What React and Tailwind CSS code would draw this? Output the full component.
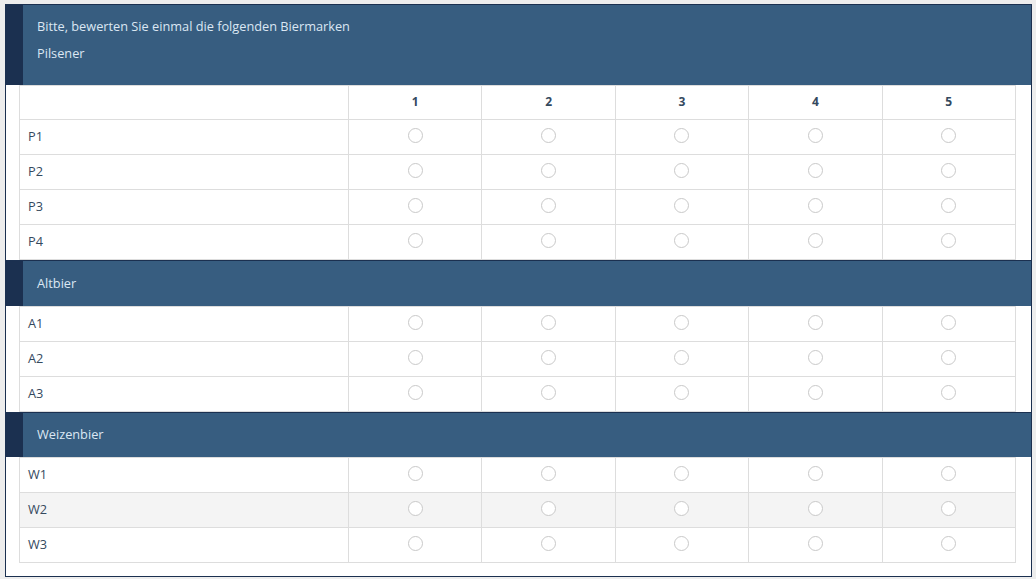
import React from "react";

const font = { fontFamily: '"Open Sans", "Noto Sans", sans-serif' };

function Radio() {
  return <span className="inline-block w-[15px] h-[15px] rounded-full border border-[#c9c9c9] bg-white align-middle -translate-y-[3px]" />;
}

function Band({ children, h }) {
  return (
    <div className="flex border-t border-[#1b3050]">
      <div className="w-[17px] shrink-0 bg-[#1b3050]" />
      <div className={"flex-1 bg-[#375d80] px-[14px] text-[12.75px] text-[#dbe7f3] flex items-center " + h}>
        {children}
      </div>
    </div>
  );
}

function Table({ rows, header }) {
  return (
    <div className="pl-[13px] pr-[15px]">
      <table className="w-full border-collapse table-fixed text-[12.75px]">
        <colgroup>
          <col className="w-[329px]" />
          <col />
          <col />
          <col />
          <col />
          <col />
        </colgroup>
        <tbody>
          {header && (
            <tr className="h-[34px]">
              <td className="border border-[#dddddd]" />
              {[1, 2, 3, 4, 5].map((n) => (
                <td key={n} className="border border-[#dddddd] text-center font-bold text-[12px] text-[#34495e] pb-[2px]">
                  {n}
                </td>
              ))}
            </tr>
          )}
          {rows.map((r) => (
            <tr key={r.label} className={"h-[35px] " + (r.gray ? "bg-[#f4f4f4]" : "bg-white")}>
              <td className="border border-[#dddddd] pl-[8px] text-[#34495e]">{r.label}</td>
              {[1, 2, 3, 4, 5].map((n) => (
                <td key={n} className="border border-[#dddddd] text-center">
                  <Radio />
                </td>
              ))}
            </tr>
          ))}
        </tbody>
      </table>
    </div>
  );
}

export default function App() {
  return (
    <div className="w-[1036px] h-[579px] bg-[#ededed] pt-[4px] px-[5px]" style={font}>
      <div className="w-[1027px] h-[573px] border border-[#1b3050] bg-white flex flex-col">
        <div className="flex">
          <div className="w-[17px] shrink-0 bg-[#1b3050]" />
          <div className="flex-1 bg-[#375d80] px-[14px] h-[80px] pt-[11px] text-[12.75px] text-[#dbe7f3]">
            <div className="leading-[20px]">Bitte, bewerten Sie einmal die folgenden Biermarken</div>
            <div className="leading-[20px] mt-[7px]">Pilsener</div>
          </div>
        </div>
        <Table header rows={[{ label: "P1" }, { label: "P2" }, { label: "P3" }, { label: "P4" }]} />
        <Band h="h-[45px]">Altbier</Band>
        <Table rows={[{ label: "A1" }, { label: "A2" }, { label: "A3" }]} />
        <Band h="h-[44px]">Weizenbier</Band>
        <Table rows={[{ label: "W1" }, { label: "W2", gray: true }, { label: "W3" }]} />
      </div>
    </div>
  );
}
